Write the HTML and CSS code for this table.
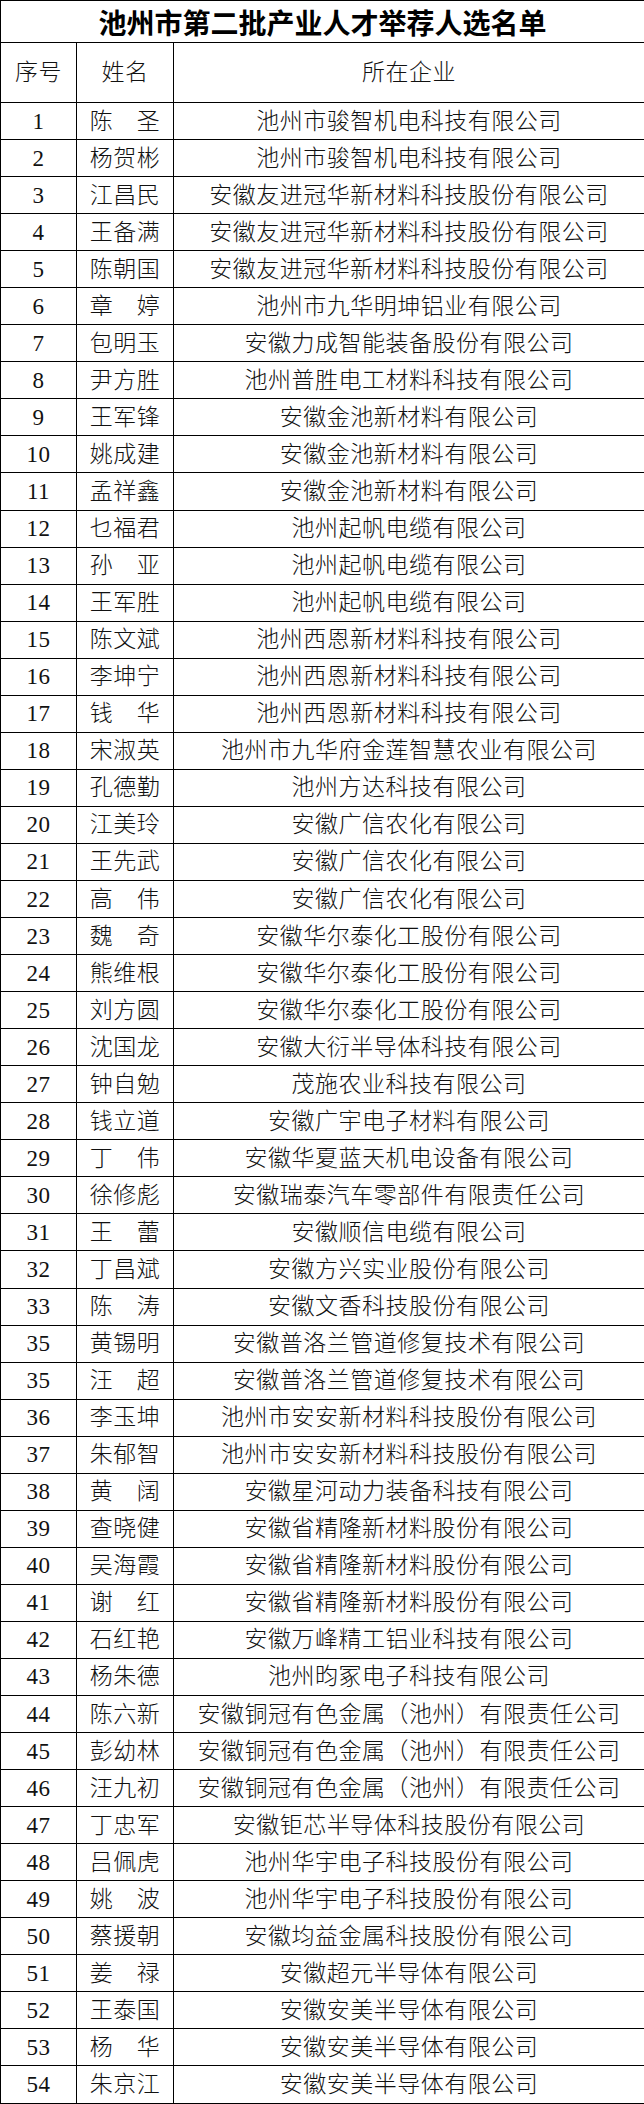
FILE: index.html
```html
<!DOCTYPE html>
<html lang="zh-CN">
<head>
<meta charset="utf-8">
<title>池州市第二批产业人才举荐人选名单</title>
<link rel="stylesheet" href="styles.css">
</head>
<body>
<table class="list">
<colgroup><col class="c-no"><col class="c-name"><col class="c-co"></colgroup>
<thead>
<tr class="title-row"><th colspan="3" class="title">池州市第二批产业人才举荐人选名单</th></tr>
<tr class="head-row"><th>序号</th><th>姓名</th><th>所在企业</th></tr>
</thead>
<tbody>
<tr><td>1</td><td>陈　圣</td><td>池州市骏智机电科技有限公司</td></tr>
<tr><td>2</td><td>杨贺彬</td><td>池州市骏智机电科技有限公司</td></tr>
<tr><td>3</td><td>江昌民</td><td>安徽友进冠华新材料科技股份有限公司</td></tr>
<tr><td>4</td><td>王备满</td><td>安徽友进冠华新材料科技股份有限公司</td></tr>
<tr><td>5</td><td>陈朝国</td><td>安徽友进冠华新材料科技股份有限公司</td></tr>
<tr><td>6</td><td>章　婷</td><td>池州市九华明坤铝业有限公司</td></tr>
<tr><td>7</td><td>包明玉</td><td>安徽力成智能装备股份有限公司</td></tr>
<tr><td>8</td><td>尹方胜</td><td>池州普胜电工材料科技有限公司</td></tr>
<tr><td>9</td><td>王军锋</td><td>安徽金池新材料有限公司</td></tr>
<tr><td>10</td><td>姚成建</td><td>安徽金池新材料有限公司</td></tr>
<tr><td>11</td><td>孟祥鑫</td><td>安徽金池新材料有限公司</td></tr>
<tr><td>12</td><td>乜福君</td><td>池州起帆电缆有限公司</td></tr>
<tr><td>13</td><td>孙　亚</td><td>池州起帆电缆有限公司</td></tr>
<tr><td>14</td><td>王军胜</td><td>池州起帆电缆有限公司</td></tr>
<tr><td>15</td><td>陈文斌</td><td>池州西恩新材料科技有限公司</td></tr>
<tr><td>16</td><td>李坤宁</td><td>池州西恩新材料科技有限公司</td></tr>
<tr><td>17</td><td>钱　华</td><td>池州西恩新材料科技有限公司</td></tr>
<tr><td>18</td><td>宋淑英</td><td>池州市九华府金莲智慧农业有限公司</td></tr>
<tr><td>19</td><td>孔德勤</td><td>池州方达科技有限公司</td></tr>
<tr><td>20</td><td>江美玲</td><td>安徽广信农化有限公司</td></tr>
<tr><td>21</td><td>王先武</td><td>安徽广信农化有限公司</td></tr>
<tr><td>22</td><td>高　伟</td><td>安徽广信农化有限公司</td></tr>
<tr><td>23</td><td>魏　奇</td><td>安徽华尔泰化工股份有限公司</td></tr>
<tr><td>24</td><td>熊维根</td><td>安徽华尔泰化工股份有限公司</td></tr>
<tr><td>25</td><td>刘方圆</td><td>安徽华尔泰化工股份有限公司</td></tr>
<tr><td>26</td><td>沈国龙</td><td>安徽大衍半导体科技有限公司</td></tr>
<tr><td>27</td><td>钟自勉</td><td>茂施农业科技有限公司</td></tr>
<tr><td>28</td><td>钱立道</td><td>安徽广宇电子材料有限公司</td></tr>
<tr><td>29</td><td>丁　伟</td><td>安徽华夏蓝天机电设备有限公司</td></tr>
<tr><td>30</td><td>徐修彪</td><td>安徽瑞泰汽车零部件有限责任公司</td></tr>
<tr><td>31</td><td>王　蕾</td><td>安徽顺信电缆有限公司</td></tr>
<tr><td>32</td><td>丁昌斌</td><td>安徽方兴实业股份有限公司</td></tr>
<tr><td>33</td><td>陈　涛</td><td>安徽文香科技股份有限公司</td></tr>
<tr><td>35</td><td>黄锡明</td><td>安徽普洛兰管道修复技术有限公司</td></tr>
<tr><td>35</td><td>汪　超</td><td>安徽普洛兰管道修复技术有限公司</td></tr>
<tr><td>36</td><td>李玉坤</td><td>池州市安安新材料科技股份有限公司</td></tr>
<tr><td>37</td><td>朱郁智</td><td>池州市安安新材料科技股份有限公司</td></tr>
<tr><td>38</td><td>黄　阔</td><td>安徽星河动力装备科技有限公司</td></tr>
<tr><td>39</td><td>查晓健</td><td>安徽省精隆新材料股份有限公司</td></tr>
<tr><td>40</td><td>吴海霞</td><td>安徽省精隆新材料股份有限公司</td></tr>
<tr><td>41</td><td>谢　红</td><td>安徽省精隆新材料股份有限公司</td></tr>
<tr><td>42</td><td>石红艳</td><td>安徽万峰精工铝业科技有限公司</td></tr>
<tr><td>43</td><td>杨朱德</td><td>池州昀冢电子科技有限公司</td></tr>
<tr><td>44</td><td>陈六新</td><td>安徽铜冠有色金属（池州）有限责任公司</td></tr>
<tr><td>45</td><td>彭幼林</td><td>安徽铜冠有色金属（池州）有限责任公司</td></tr>
<tr><td>46</td><td>汪九初</td><td>安徽铜冠有色金属（池州）有限责任公司</td></tr>
<tr><td>47</td><td>丁忠军</td><td>安徽钜芯半导体科技股份有限公司</td></tr>
<tr><td>48</td><td>吕佩虎</td><td>池州华宇电子科技股份有限公司</td></tr>
<tr><td>49</td><td>姚　波</td><td>池州华宇电子科技股份有限公司</td></tr>
<tr><td>50</td><td>蔡援朝</td><td>安徽均益金属科技股份有限公司</td></tr>
<tr><td>51</td><td>姜　禄</td><td>安徽超元半导体有限公司</td></tr>
<tr><td>52</td><td>王泰国</td><td>安徽安美半导体有限公司</td></tr>
<tr><td>53</td><td>杨　华</td><td>安徽安美半导体有限公司</td></tr>
<tr><td>54</td><td>朱京江</td><td>安徽安美半导体有限公司</td></tr>
</tbody>
</table>
</body>
</html>
```

FILE: styles.css
```css
html, body {
  margin: 0;
  padding: 0;
  background: #ffffff;
}

.list {
  width: 644px;
  border-collapse: collapse;
  table-layout: fixed;
  font-family: "Liberation Serif", "Noto Sans CJK SC", serif;
  color: #000000;
}

.c-no { width: 76px; }
.c-name { width: 97px; }
.c-co { width: 471px; }

.list th,
.list td {
  border: 1px solid #000000;
  padding: 0;
  text-align: center;
  vertical-align: middle;
  font-size: 23px;
  font-weight: 300;
  letter-spacing: 0.5px;
  line-height: 1;
  white-space: nowrap;
  color: #111111;
}

.title-row { height: 42px; }

.list th.title {
  font-family: "Noto Sans CJK SC", sans-serif;
  font-size: 28px;
  font-weight: bold;
  letter-spacing: 0;
  color: #000000;
}

.head-row { height: 60px; }

.list tbody tr { height: 37.06px; }
```
